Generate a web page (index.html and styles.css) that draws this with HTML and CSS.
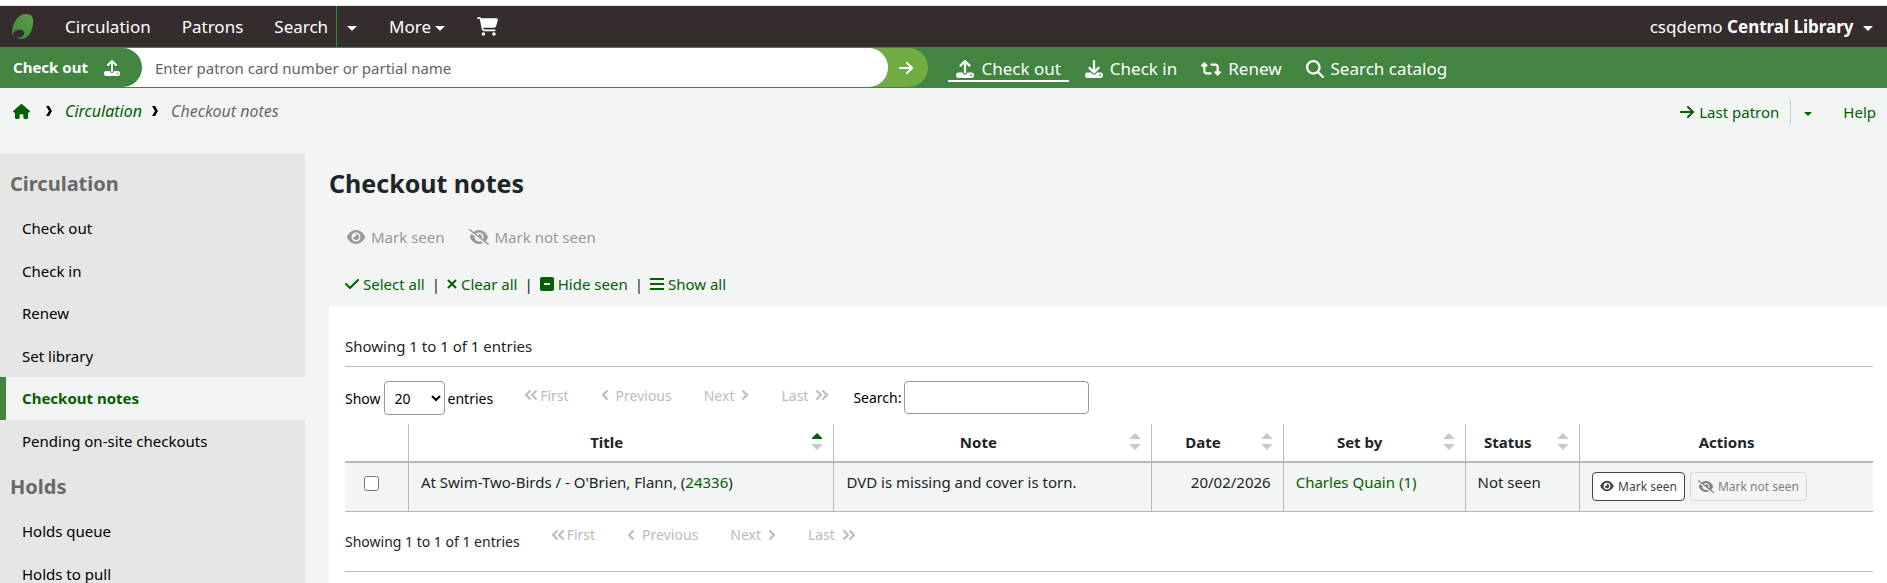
FILE: index.html
```html
<!DOCTYPE html>
<html lang="en">
<head>
    <meta charset="UTF-8">
    <meta name="viewport" content="width=device-width, initial-scale=1.0">
    <title>Checkout notes</title>
    <link rel="stylesheet" href="styles.css">
</head>
<body>

<!-- Shared icons -->
<svg class="sprite" aria-hidden="true">
    <symbol id="i-upload" viewBox="0 0 512 512"><path d="M288 109.3V352c0 17.7-14.3 32-32 32s-32-14.3-32-32V109.3l-73.4 73.4c-12.5 12.5-32.8 12.5-45.3 0s-12.5-32.8 0-45.3l128-128c12.5-12.5 32.8-12.5 45.3 0l128 128c12.5 12.5 12.5 32.8 0 45.3s-32.8 12.5-45.3 0L288 109.3zM64 352H192c0 35.3 28.7 64 64 64s64-28.7 64-64H448c35.3 0 64 28.7 64 64v32c0 35.3-28.7 64-64 64H64c-35.3 0-64-28.7-64-64V416c0-35.3 28.7-64 64-64zM432 456a24 24 0 1 0 0-48 24 24 0 1 0 0 48z"/></symbol>
    <symbol id="i-download" viewBox="0 0 512 512"><path d="M288 32c0-17.7-14.3-32-32-32s-32 14.3-32 32V274.7l-73.4-73.4c-12.5-12.5-32.8-12.5-45.3 0s-12.5 32.8 0 45.3l128 128c12.5 12.5 32.8 12.5 45.3 0l128-128c12.5-12.5 12.5-32.8 0-45.3s-32.8-12.5-45.3 0L288 274.7V32zM64 352c-35.3 0-64 28.7-64 64v32c0 35.3 28.7 64 64 64H448c35.3 0 64-28.7 64-64V416c0-35.3-28.7-64-64-64H346.5l-45.3 45.3c-25 25-65.5 25-90.5 0L165.5 352H64zm368 56a24 24 0 1 1 0 48 24 24 0 1 1 0-48z"/></symbol>
    <symbol id="i-retweet" viewBox="0 0 576 512"><path d="M272 416c17.7 0 32-14.3 32-32s-14.3-32-32-32H160c-17.7 0-32-14.3-32-32V192h32c12.9 0 24.6-7.8 29.6-19.8s2.2-25.7-6.9-34.9l-64-64c-12.5-12.5-32.8-12.5-45.3 0l-64 64c-9.2 9.2-11.9 22.9-6.9 34.9s16.6 19.8 29.6 19.8l32 0 0 128c0 53 43 96 96 96H272zM304 96c-17.7 0-32 14.3-32 32s14.3 32 32 32l112 0c17.7 0 32 14.3 32 32l0 128H416c-12.9 0-24.6 7.8-29.6 19.8s-2.2 25.7 6.9 34.9l64 64c12.5 12.5 32.8 12.5 45.3 0l64-64c9.2-9.2 11.9-22.9 6.9-34.9s-16.6-19.8-29.6-19.8l-32 0V192c0-53-43-96-96-96L304 96z"/></symbol>
    <symbol id="i-search" viewBox="0 0 512 512"><path d="M416 208c0 45.9-14.9 88.3-40 122.7L502.6 457.4c12.5 12.5 12.5 32.8 0 45.3s-32.8 12.5-45.3 0L330.7 376c-34.4 25.2-76.8 40-122.7 40C93.1 416 0 322.9 0 208S93.1 0 208 0S416 93.1 416 208zM208 352a144 144 0 1 0 0-288 144 144 0 1 0 0 288z"/></symbol>
    <symbol id="i-arrow" viewBox="0 0 448 512"><path d="M438.6 278.6c12.5-12.5 12.5-32.8 0-45.3l-160-160c-12.5-12.5-32.8-12.5-45.3 0s-12.5 32.8 0 45.3L338.8 224 32 224c-17.7 0-32 14.3-32 32s14.3 32 32 32l306.7 0L233.4 393.4c-12.5 12.5-12.5 32.8 0 45.3s32.8 12.5 45.3 0l160-160z"/></symbol>
    <symbol id="i-eye" viewBox="0 0 576 512"><path d="M288 32c-80.8 0-145.5 36.8-192.6 80.6C48.6 156 17.3 208 2.5 243.7c-3.3 7.9-3.3 16.7 0 24.6C17.3 304 48.6 356 95.4 399.4C142.5 443.2 207.2 480 288 480s145.5-36.8 192.6-80.6c46.8-43.5 78.1-95.4 93-131.1c3.3-7.9 3.3-16.7 0-24.6c-14.9-35.7-46.2-87.7-93-131.1C433.5 68.8 368.8 32 288 32zM144 256a144 144 0 1 1 288 0 144 144 0 1 1 -288 0zm144-64c0 35.3-28.7 64-64 64c-7.1 0-13.9-1.2-20.3-3.3c-5.5-1.8-11.9 1.6-11.7 7.4c.3 6.9 1.3 13.8 3.2 20.7c13.7 51.2 66.4 81.6 117.6 67.9s81.6-66.4 67.9-117.6c-11.1-41.5-47.8-69.4-88.6-71.1c-5.8-.2-9.2 6.1-7.4 11.7c2.1 6.4 3.3 13.2 3.3 20.3z"/></symbol>
    <symbol id="i-eye-slash" viewBox="0 0 640 512"><path d="M38.8 5.1C28.4-3.1 13.3-1.2 5.1 9.2S-1.2 34.7 9.2 42.9l592 464c10.4 8.2 25.5 6.3 33.7-4.1s6.3-25.5-4.1-33.7L525.6 386.7c39.6-40.6 66.4-86.1 79.9-118.4c3.3-7.9 3.3-16.7 0-24.6c-14.9-35.7-46.2-87.7-93-131.1C465.5 68.8 400.8 32 320 32c-68.2 0-125 26.3-169.3 60.8L38.8 5.1zM223.1 149.5C248.6 126.2 282.7 112 320 112c79.5 0 144 64.5 144 144c0 24.9-6.3 48.3-17.4 68.7L408 294.5c8.4-19.3 10.6-41.4 4.8-63.3c-11.1-41.5-47.8-69.4-88.6-71.1c-5.8-.2-9.2 6.1-7.4 11.7c2.1 6.4 3.3 13.2 3.3 20.3c0 10.2-2.4 19.8-6.6 28.3l-90.3-70.8zM373 389.9c-16.4 6.5-34.3 10.1-53 10.1c-79.5 0-144-64.5-144-144c0-6.9 .5-13.6 1.4-20.2L83.1 161.5C60.3 191.2 44 220.8 34.5 243.7c-3.3 7.9-3.3 16.7 0 24.6c14.9 35.7 46.2 87.7 93 131.1C174.5 443.2 239.2 480 320 480c47.8 0 89.9-12.9 126.2-32.5L373 389.9z"/></symbol>
    <symbol id="i-angle-left" viewBox="0 0 8 12"><path class="stroke" d="M6.5 1.5 2 6l4.5 4.5"/></symbol>
    <symbol id="i-angle-right" viewBox="0 0 8 12"><path class="stroke" d="M1.5 1.5 6 6l-4.5 4.5"/></symbol>
    <symbol id="i-angles-left" viewBox="0 0 14 12"><path class="stroke" d="M6.5 1.5 2 6l4.5 4.5M12.5 1.5 8 6l4.5 4.5"/></symbol>
    <symbol id="i-angles-right" viewBox="0 0 14 12"><path class="stroke" d="M1.5 1.5 6 6l-4.5 4.5M7.5 1.5 12 6l-4.5 4.5"/></symbol>
    <symbol id="i-sort" viewBox="0 0 10 17"><path class="sort-up" d="M5 0l5 5v1H0V5z"/><path class="sort-down" d="M5 17l5-5v-1H0v1z"/></symbol>
</svg>

<!-- Main navigation -->
<nav class="navbar">
    <a class="brand" href="#" aria-label="Home">
        <svg width="22" height="26" viewBox="0 0 22 26">
            <defs>
                <linearGradient id="leaf" x1="1" y1="0" x2="0" y2="1">
                    <stop offset="0" stop-color="#5fa044"/>
                    <stop offset="1" stop-color="#3b8443"/>
                </linearGradient>
            </defs>
            <path fill="url(#leaf)" d="M0 22C-1 11 5 0 14 0c6 0 8 4 7 10-1 9-6 15-12 15-2 0-3-1-3-2 4 1 6-1 6-4s-3-4-6-3c-3 0-5 3-6 6z"/>
        </svg>
    </a>
    <a class="nav-circulation" href="#">Circulation</a>
    <a class="nav-patrons" href="#">Patrons</a>
    <a class="nav-search" href="#">Search</a>
    <button class="nav-split" type="button" aria-label="Search options"><span class="caret"></span></button>
    <button class="nav-more" type="button">More <span class="caret"></span></button>
    <a class="nav-cart" href="#" aria-label="Cart">
        <svg class="icon" width="21" height="19" viewBox="0 0 576 512"><path d="M0 24C0 10.7 10.7 0 24 0H69.5c22 0 41.5 12.8 50.6 32h411c26.3 0 45.5 25 38.6 50.4l-41 152.3c-8.5 31.4-37 53.3-69.5 53.3H170.7l5.4 28.5c2.2 11.3 12.1 19.5 23.6 19.5H488c13.3 0 24 10.7 24 24s-10.7 24-24 24H199.7c-34.6 0-64.3-24.6-70.7-58.5L77.4 54.5c-.7-3.8-4-6.5-7.9-6.5H24C10.7 48 0 37.3 0 24zM128 464a48 48 0 1 1 96 0 48 48 0 1 1 -96 0zm336-48a48 48 0 1 1 0 96 48 48 0 1 1 0-96z"/></svg>
    </a>
    <button class="nav-user" type="button">csqdemo <strong>Central Library</strong> <span class="caret"></span></button>
</nav>

<!-- Search bar -->
<div class="search-header">
    <form class="patron-form">
        <label class="form-title" for="findborrower">Check out <svg class="icon" width="16" height="16"><use href="#i-upload"/></svg></label>
        <input class="form-input" type="text" id="findborrower" placeholder="Enter patron card number or partial name">
        <button class="form-go" type="submit" aria-label="Submit"><svg class="icon" width="14" height="16"><use href="#i-arrow"/></svg></button>
    </form>
    <div class="tabs">
        <a class="tab active" href="#"><svg class="icon" width="18" height="18"><use href="#i-upload"/></svg>Check out</a>
        <a class="tab" href="#"><svg class="icon" width="18" height="18"><use href="#i-download"/></svg>Check in</a>
        <a class="tab" href="#"><svg class="icon" width="20" height="18"><use href="#i-retweet"/></svg>Renew</a>
        <a class="tab" href="#"><svg class="icon" width="18" height="18"><use href="#i-search"/></svg>Search catalog</a>
    </div>
</div>

<!-- Breadcrumbs -->
<div class="sub-header">
    <div class="breadcrumbs">
        <a href="#" aria-label="Home"><svg class="icon" width="17" height="15" viewBox="0 0 576 512"><path d="M575.8 255.5c0 18-15 32.1-32 32.1h-32l.7 160.2c0 2.7-.2 5.4-.5 8.1V472c0 22.1-17.9 40-40 40H392c-22.1 0-40-17.9-40-40V384c0-17.7-14.3-32-32-32H256c-17.7 0-32 14.3-32 32v88c0 22.1-17.9 40-40 40H104c-22.1 0-40-17.9-40-40V287.6H32c-18 0-32-14-32-32.1c0-9 3-17 10-24L266.4 8c7-7 15-8 22-8s15 2 21 7L564.8 231.5c8 7 12 15 11 24z"/></svg></a>
        <svg class="crumb-sep" width="6" height="10" viewBox="0 0 6 10"><path d="M0 0h3l3 5-3 5H0l3-5z"/></svg>
        <a href="#">Circulation</a>
        <svg class="crumb-sep" width="6" height="10" viewBox="0 0 6 10"><path d="M0 0h3l3 5-3 5H0l3-5z"/></svg>
        <span class="current">Checkout notes</span>
    </div>
    <div class="sub-links">
        <a class="last-patron" href="#"><svg class="icon" width="14" height="16"><use href="#i-arrow"/></svg>Last patron</a>
        <button class="last-toggle" type="button" aria-label="Recent patrons"><span class="caret"></span></button>
        <a class="help" href="#">Help</a>
    </div>
</div>

<div class="page">
    <!-- Sidebar -->
    <aside class="sidebar">
        <h2>Circulation</h2>
        <ul>
            <li><a href="#">Check out</a></li>
            <li><a href="#">Check in</a></li>
            <li><a href="#">Renew</a></li>
            <li><a href="#">Set library</a></li>
            <li><a class="current" href="#">Checkout notes</a></li>
            <li><a href="#">Pending on-site checkouts</a></li>
        </ul>
        <h2>Holds</h2>
        <ul>
            <li><a href="#">Holds queue</a></li>
            <li><a href="#">Holds to pull</a></li>
        </ul>
    </aside>

    <main class="main">
        <h1>Checkout notes</h1>

        <div class="toolbar">
            <button type="button" disabled><svg class="icon" width="18" height="16"><use href="#i-eye"/></svg>Mark seen</button>
            <button type="button" disabled><svg class="icon" width="20" height="16"><use href="#i-eye-slash"/></svg>Mark not seen</button>
        </div>

        <div class="select-links">
            <a href="#"><svg class="icon" width="14" height="16" viewBox="0 0 448 512"><path d="M438.6 105.4c12.5 12.5 12.5 32.8 0 45.3l-256 256c-12.5 12.5-32.8 12.5-45.3 0l-128-128c-12.5-12.5-12.5-32.8 0-45.3s32.8-12.5 45.3 0L160 338.7 393.4 105.4c12.5-12.5 32.8-12.5 45.3 0z"/></svg>Select all</a>
            <span>|</span>
            <a href="#"><svg width="10" height="10" viewBox="0 0 10 10"><path class="stroke" d="M1 1l8 8M9 1 1 9"/></svg>Clear all</a>
            <span>|</span>
            <a href="#"><svg class="icon" width="14" height="14" viewBox="0 0 14 14"><path fill-rule="evenodd" d="M2 0h10a2 2 0 0 1 2 2v10a2 2 0 0 1-2 2H2a2 2 0 0 1-2-2V2a2 2 0 0 1 2-2zM4 6v2h6V6z"/></svg>Hide seen</a>
            <span>|</span>
            <a href="#"><svg width="14" height="12" viewBox="0 0 14 12"><path class="stroke" d="M0 1h14M0 6h14M0 11h14"/></svg>Show all</a>
        </div>

        <div class="panel">
            <p class="showing">Showing 1 to 1 of 1 entries</p>

            <div class="table-controls">
                <label class="length">Show
                    <select>
                        <option>10</option>
                        <option selected>20</option>
                        <option>50</option>
                        <option>100</option>
                    </select>
                    entries</label>
                <div class="pager">
                    <button type="button" disabled><svg width="14" height="12"><use href="#i-angles-left"/></svg>First</button>
                    <button class="spaced" type="button" disabled><svg width="8" height="12"><use href="#i-angle-left"/></svg>Previous</button>
                    <button class="spaced" type="button" disabled>Next<svg width="8" height="12"><use href="#i-angle-right"/></svg></button>
                    <button class="spaced" type="button" disabled>Last<svg width="14" height="12"><use href="#i-angles-right"/></svg></button>
                </div>
                <label class="filter">Search: <input type="text"></label>
            </div>

            <table class="notes">
                <thead>
                <tr>
                    <th class="col-check"></th>
                    <th class="col-title sortable asc">Title<svg class="sort" width="10" height="17"><use href="#i-sort"/></svg></th>
                    <th class="col-note sortable">Note<svg class="sort" width="10" height="17"><use href="#i-sort"/></svg></th>
                    <th class="col-date sortable">Date<svg class="sort" width="10" height="17"><use href="#i-sort"/></svg></th>
                    <th class="col-setby sortable">Set by<svg class="sort" width="10" height="17"><use href="#i-sort"/></svg></th>
                    <th class="col-status sortable">Status<svg class="sort" width="10" height="17"><use href="#i-sort"/></svg></th>
                    <th>Actions</th>
                </tr>
                </thead>
                <tbody>
                <tr>
                    <td class="check"><input type="checkbox" aria-label="Select note"></td>
                    <td>At Swim-Two-Birds / - O'Brien, Flann, (<a href="#">24336</a>)</td>
                    <td>DVD is missing and cover is torn.</td>
                    <td class="date">20/02/2026</td>
                    <td><a href="#">Charles Quain (1)</a></td>
                    <td>Not seen</td>
                    <td class="actions">
                        <div class="action-buttons">
                            <button type="button"><svg class="icon" width="14" height="12"><use href="#i-eye"/></svg>Mark seen</button>
                            <button type="button" disabled><svg class="icon" width="16" height="13"><use href="#i-eye-slash"/></svg>Mark not seen</button>
                        </div>
                    </td>
                </tr>
                </tbody>
            </table>

            <div class="table-footer">
                <span class="info">Showing 1 to 1 of 1 entries</span>
                <div class="pager">
                    <button type="button" disabled><svg width="14" height="12"><use href="#i-angles-left"/></svg>First</button>
                    <button class="spaced" type="button" disabled><svg width="8" height="12"><use href="#i-angle-left"/></svg>Previous</button>
                    <button class="spaced" type="button" disabled>Next<svg width="8" height="12"><use href="#i-angle-right"/></svg></button>
                    <button class="spaced" type="button" disabled>Last<svg width="14" height="12"><use href="#i-angles-right"/></svg></button>
                </div>
            </div>
        </div>
    </main>
</div>

</body>
</html>
```
FILE: styles.css
```css
/* styles.css */
* {
    box-sizing: border-box;
}

html {
    background-color: #fff;
}

body {
    font-family: "Noto Sans", "Open Sans", sans-serif;
    font-size: 15px;
    line-height: 1.5;
    color: #202427;
    margin: 5px 0 0;
    background-color: #f3f4f4;
}

a {
    color: #006100;
    text-decoration: none;
}

button,
input,
select {
    font-family: inherit;
    font-size: inherit;
}

button {
    background: none;
    border: none;
    padding: 0;
    color: inherit;
    cursor: pointer;
}

.sprite {
    display: none;
}

.icon {
    fill: currentColor;
}

.stroke {
    fill: none;
    stroke: currentColor;
    stroke-width: 2;
}

.caret {
    display: inline-block;
    border: 5px solid transparent;
    border-top-color: currentColor;
    border-bottom: 0;
    vertical-align: middle;
}

/* Main navigation */
.navbar {
    display: flex;
    align-items: center;
    height: 42px;
    padding: 0 14px 0 12px;
    border-top: 1px solid #dde5dd;
    background-color: #352c2e;
    color: #fff;
    font-size: 17px;
}

.navbar a {
    color: #fff;
}

.brand {
    display: flex;
    margin-right: 31px;
}

.nav-circulation,
.nav-patrons {
    margin-right: 31px;
}

.nav-search {
    padding-right: 8px;
}

.nav-split {
    align-self: stretch;
    border-left: 1px solid #2e8b2e;
    padding: 0 10px;
    margin-right: 22px;
}

.nav-more {
    margin-right: 32px;
}

.nav-more .caret {
    margin-left: -1px;
}

.nav-cart {
    display: flex;
}

.nav-user {
    margin-left: auto;
}

.nav-user .caret {
    margin-left: 5px;
}

/* Search bar */
.search-header {
    display: flex;
    height: 41px;
    background-color: #418541;
    color: #fff;
}

.patron-form {
    display: flex;
    width: 49.2%;
    margin: 1px 0;
    border-radius: 0 20px 20px 0;
    background: linear-gradient(to right, #fff 50%, #70ae43 50%);
}

.form-title {
    display: flex;
    align-items: center;
    gap: 16px;
    padding: 0 22px 0 13px;
    border-radius: 0 20px 20px 0;
    background-color: #418541;
    font-weight: bold;
}

.form-input {
    flex: 1;
    border: none;
    border-radius: 0 20px 20px 0;
    padding: 0 13px;
    background-color: #fff;
}

.form-input::placeholder {
    color: #5f6368;
}

.form-go {
    display: flex;
    align-items: center;
    justify-content: center;
    width: 40px;
    padding-right: 4px;
}

.tabs {
    display: flex;
    align-items: center;
    gap: 8px;
    margin-left: 20px;
    font-size: 17px;
    line-height: 22px;
}

.tab {
    display: flex;
    align-items: center;
    gap: 7px;
    padding: 4px 8px 0;
    border-bottom: 2px solid transparent;
    color: #fff;
}

.tab.active {
    border-bottom-color: #fff;
}

/* Breadcrumbs */
.sub-header {
    display: flex;
    justify-content: space-between;
    align-items: center;
    height: 48px;
    padding: 0 11px 0 13px;
}

.breadcrumbs {
    display: flex;
    align-items: center;
    padding-bottom: 2px;
    font-size: 16px;
    font-style: italic;
}

.breadcrumbs a {
    display: flex;
}

.crumb-sep {
    margin: 0 13px 0 10px;
}

.breadcrumbs a:first-child {
    margin-right: 6px;
}

.breadcrumbs .current {
    color: #696969;
}

.sub-links {
    display: flex;
    align-items: center;
    color: #006100;
}

.last-patron {
    display: flex;
    align-items: center;
    gap: 5px;
    padding-right: 11px;
}

.last-toggle {
    height: 26px;
    border-left: 1px solid #ccc;
    padding: 0 13px;
    margin-right: 18px;
}

.last-toggle .caret {
    border-width: 4px 4px 0;
}

.page {
    display: flex;
    align-items: stretch;
    gap: 24px;
    margin-top: 18px;
}

/* Sidebar */
.sidebar {
    flex: 0 0 305px;
    background-color: #e6e6e6;
    padding-top: 5px;
}

.sidebar h2 {
    margin: 0;
    padding: 10px 10px 8px;
    color: #696969;
    font-size: 20px;
    line-height: 30px;
}

.sidebar ul {
    list-style: none;
    margin: 0;
    padding: 0;
}

.sidebar li a {
    display: block;
    padding: 10px 16px;
    border-left: 6px solid transparent;
    color: #000;
}

.sidebar li .current {
    background-color: #f3f4f4;
    border-left-color: #418541;
    color: #006100;
    font-weight: bold;
}

/* Main column */
.main {
    flex: 1;
}

h1 {
    margin: 11px 0 0;
    font-size: 25px;
    line-height: 36px;
}

.toolbar {
    display: flex;
    gap: 24px;
    padding: 23px 18px 22px;
    color: #999;
}

.toolbar button {
    display: flex;
    align-items: center;
    gap: 6px;
    line-height: 26px;
}

.select-links {
    display: flex;
    gap: 7px;
    padding: 1px 16px 10px;
}

.select-links a {
    display: flex;
    align-items: center;
    gap: 4px;
}

.panel {
    background-color: #fff;
    padding: 29px 14px 40px 16px;
}

.showing {
    margin: 0;
    padding-bottom: 9px;
    border-bottom: 1px solid #b9b9b9;
}

.table-controls {
    display: flex;
    align-items: flex-start;
    padding: 14px 0 9px;
    color: #000;
    font-size: 14px;
}

.length,
.filter {
    display: flex;
    align-items: center;
    gap: 3px;
}

.length select {
    width: 61px;
    height: 34px;
    padding: 0 6px;
    border: 1px solid #999;
    border-radius: 4px;
    background-color: #fff;
    color: #000;
}

.filter input {
    width: 185px;
    height: 33px;
    border: 1px solid #999;
    border-radius: 4px;
    background-color: #fff;
}

.pager {
    display: flex;
    gap: 32px;
    margin: 0 24px 0 31px;
    color: #bbb;
    font-size: 14px;
}

.pager button {
    display: flex;
    align-items: center;
    gap: 2px;
    height: 28px;
}

.pager .spaced {
    gap: 7px;
}

/* Notes table */
.notes {
    width: 100%;
    table-layout: fixed;
    border-collapse: collapse;
}

.notes th,
.notes td {
    border-left: 1px solid #b9b9b9;
    padding: 8px 12px 10px;
    text-align: left;
    vertical-align: top;
}

.notes th:first-child,
.notes td:first-child {
    border-left: none;
}

.notes th {
    height: 37px;
    padding: 7px 12px;
    border-bottom: 2px solid #b9b9b9;
    text-align: center;
}

.notes .sortable {
    position: relative;
    padding-right: 41px;
}

.sort {
    position: absolute;
    top: 9px;
    right: 11px;
    fill: #c8c8c8;
    color: #c8c8c8;
}

.asc .sort {
    color: #006100;
}

.sort-up {
    fill: currentColor;
}

.notes td {
    border-bottom: 1px solid #b9b9b9;
    background-color: #f3f4f4;
}

.col-check {
    width: 4.15%;
}

.col-title {
    width: 27.85%;
}

.col-note {
    width: 20.8%;
}

.col-date {
    width: 8.6%;
}

.col-setby {
    width: 11.9%;
}

.col-status {
    width: 7.5%;
}

.notes .date {
    text-align: right;
}

.notes .check {
    padding: 13px 19px;
}

.check input {
    display: block;
    width: 15px;
    height: 15px;
    margin: 0;
}

.action-buttons {
    display: flex;
    gap: 5px;
    padding-top: 1px;
}

.action-buttons button {
    display: flex;
    align-items: center;
    gap: 4px;
    height: 29px;
    padding: 0 7px;
    border: 1px solid #444;
    border-radius: 4px;
    background-color: #fff;
    color: #444;
    font-size: 12px;
}

.action-buttons button:disabled {
    border-color: #d8d8d8;
    background-color: transparent;
    color: #808080;
}

.table-footer {
    display: flex;
    align-items: flex-start;
    height: 60px;
    padding-top: 9px;
    border-bottom: 1px solid #b9b9b9;
}

.info {
    padding-top: 10px;
    font-size: 14px;
}
```
